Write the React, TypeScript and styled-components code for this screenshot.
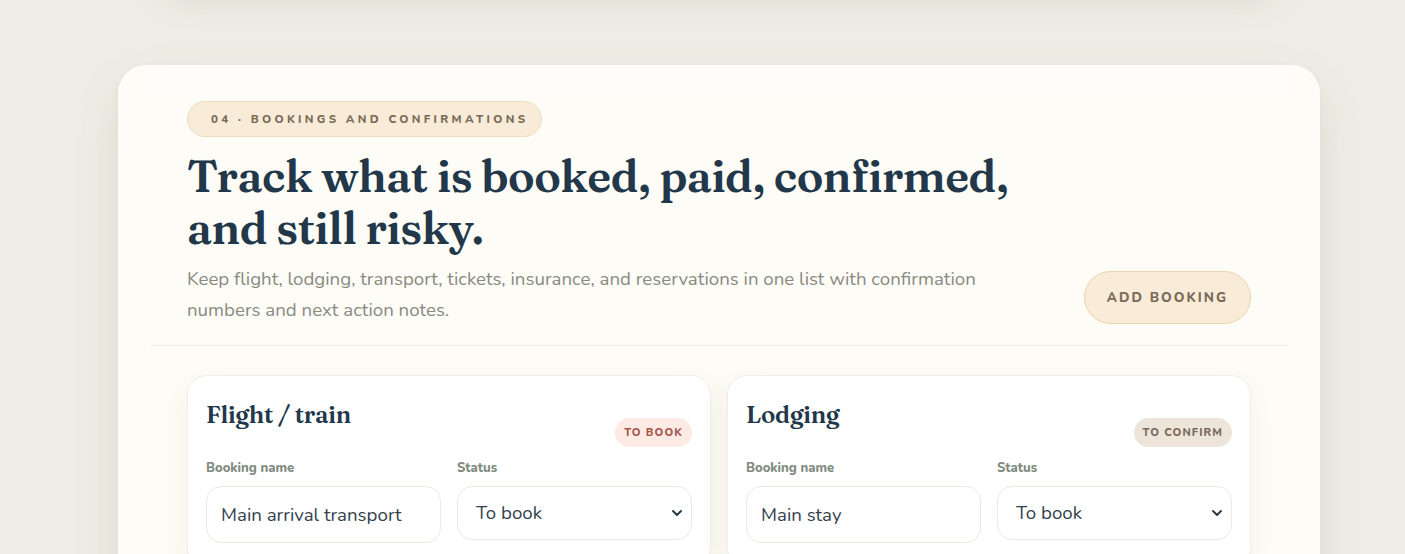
import React from "react";
import styled, { createGlobalStyle } from "styled-components";
import { ChevronDown } from "lucide-react";

const GlobalStyle = createGlobalStyle`
  * { box-sizing: border-box; }
  html, body { margin: 0; padding: 0; }
  body {
    background: #efeee6;
    font-family: "Nunito", "Lato", "Noto Sans", sans-serif;
    overflow: hidden;
  }
`;

const serif = `"Fraunces", "Liberation Serif", "DejaVu Serif", serif`;

const Page = styled.div`
  display: flex;
  flex-direction: column;
  gap: 85px;
  height: 554px;
  overflow: hidden;
  padding: 0 85px 0 118px;
`;

const PrevSection = styled.section`
  flex-shrink: 0;
  height: 200px;
  margin-top: -220px;
  margin-left: 40px;
  margin-right: 40px;
  border-radius: 28px;
  background: #f7f6ef;
  box-shadow: 0 18px 40px rgba(90, 90, 60, 0.14);
`;

const Panel = styled.section`
  width: 1202px;
  flex-shrink: 0;
  border-radius: 28px;
  background: #fdfcf6;
  box-shadow: 0 20px 50px rgba(90, 90, 60, 0.12), 0 2px 6px rgba(90, 90, 60, 0.05);
  padding: 0 33px 40px;
`;

const Header = styled.header`
  display: flex;
  align-items: flex-end;
  justify-content: space-between;
  padding: 36px 36px 19px;
  border-bottom: 1px solid #ece8de;
  background: linear-gradient(180deg, rgba(255, 255, 255, 0.5), rgba(255, 255, 255, 0) 60px);
`;

const Intro = styled.div`
  display: flex;
  flex-direction: column;
  align-items: flex-start;
`;

const Eyebrow = styled.span`
  display: inline-flex;
  align-items: center;
  height: 36px;
  padding: 0 13px 0 23px;
  border-radius: 999px;
  background: #f8ebd8;
  border: 1px solid #f0dcbd;
  color: #7a6a57;
  font-size: 11.5px;
  font-weight: 800;
  letter-spacing: 3.3px;
`;

const Title = styled.h1`
  margin: 13px 0 0;
  max-width: 860px;
  font-family: ${serif};
  font-weight: 600;
  font-size: 44.5px;
  line-height: 52px;
  letter-spacing: -0.5px;
  color: #22384a;
`;

const Lede = styled.p`
  margin: 10px 0 0;
  max-width: 810px;
  font-size: 18.7px;
  line-height: 31px;
  color: #8b8a80;
`;

const AddButton = styled.button`
  height: 53px;
  margin-bottom: 2px;
  padding: 0 22px;
  border-radius: 999px;
  border: 1px solid #ecd4ae;
  background: #f8ebd8;
  color: #7a6a57;
  font-family: inherit;
  font-size: 13.5px;
  font-weight: 800;
  letter-spacing: 2px;
  cursor: pointer;
`;

const Grid = styled.div`
  display: grid;
  grid-template-columns: minmax(0, 1fr) minmax(0, 1fr);
  gap: 16px;
  padding: 29px 36px 0;
`;

const Card = styled.article`
  background: #ffffff;
  border: 1px solid #f0ede4;
  border-radius: 20px;
  box-shadow: 0 10px 28px rgba(90, 90, 60, 0.07);
  padding: 22px 18px 24px;
`;

const CardTop = styled.div`
  display: flex;
  justify-content: space-between;
  align-items: flex-start;
`;

const CardTitle = styled.h2`
  margin: 0;
  font-family: ${serif};
  font-weight: 600;
  font-size: 24px;
  line-height: 34px;
  letter-spacing: -0.3px;
  color: #22384a;
`;

const Badge = styled.span<{ $tone: "danger" | "neutral" }>`
  margin-top: 20px;
  height: 29px;
  display: inline-flex;
  align-items: center;
  padding: 0 9px;
  border-radius: 999px;
  font-size: 11px;
  font-weight: 800;
  letter-spacing: 1.1px;
  background: ${(p) => (p.$tone === "danger" ? "#fdeae5" : "#ede5da")};
  color: ${(p) => (p.$tone === "danger" ? "#a5574b" : "#786a5b")};
`;

const Fields = styled.div`
  display: grid;
  grid-template-columns: minmax(0, 1fr) minmax(0, 1fr);
  gap: 16px;
  margin-top: 12px;
`;

const Field = styled.label`
  display: flex;
  flex-direction: column;
  gap: 9px;
  min-width: 0;
`;

const Label = styled.span`
  font-size: 13px;
  font-weight: 800;
  color: #7f8b80;
`;

const TextInput = styled.input`
  width: 100%;
  height: 57px;
  padding: 0 14px;
  border: 1px solid #ece9e1;
  border-radius: 15px;
  background: #fff;
  font-family: inherit;
  font-size: 18.7px;
  color: #33414c;
  outline: none;
`;

const SelectWrap = styled.div`
  position: relative;
`;

const Select = styled.select`
  width: 100%;
  height: 54px;
  padding: 0 36px 0 18px;
  appearance: none;
  border: 1px solid #ece9e1;
  border-radius: 15px;
  background: #fff;
  font-family: inherit;
  font-size: 18.7px;
  color: #33414c;
  outline: none;
`;

const Chevron = styled(ChevronDown)`
  position: absolute;
  right: 7px;
  top: 50%;
  transform: translateY(-50%);
  pointer-events: none;
  color: #2a3a47;
`;

type Booking = {
  title: string;
  badge: string;
  tone: "danger" | "neutral";
  name: string;
  status: string;
};

const bookings: Booking[] = [
  { title: "Flight / train", badge: "TO BOOK", tone: "danger", name: "Main arrival transport", status: "To book" },
  { title: "Lodging", badge: "TO CONFIRM", tone: "neutral", name: "Main stay", status: "To book" },
];

const statuses = ["To book", "Booked", "Paid", "Confirmed"];

const BookingCard = ({ booking }: { booking: Booking }) => (
  <Card>
    <CardTop>
      <CardTitle>{booking.title}</CardTitle>
      <Badge $tone={booking.tone}>{booking.badge}</Badge>
    </CardTop>
    <Fields>
      <Field>
        <Label>Booking name</Label>
        <TextInput defaultValue={booking.name} />
      </Field>
      <Field>
        <Label>Status</Label>
        <SelectWrap>
          <Select defaultValue={booking.status}>
            {statuses.map((s) => (
              <option key={s}>{s}</option>
            ))}
          </Select>
          <Chevron size={16} strokeWidth={3} />
        </SelectWrap>
      </Field>
    </Fields>
  </Card>
);

export default function App() {
  return (
    <>
      <GlobalStyle />
      <Page>
        <PrevSection />
        <Panel>
          <Header>
            <Intro>
              <Eyebrow>04 · BOOKINGS AND CONFIRMATIONS</Eyebrow>
              <Title>Track what is booked, paid, confirmed, and still risky.</Title>
              <Lede>
                Keep flight, lodging, transport, tickets, insurance, and reservations in one list with
                confirmation numbers and next action notes.
              </Lede>
            </Intro>
            <AddButton>ADD BOOKING</AddButton>
          </Header>
          <Grid>
            {bookings.map((b) => (
              <BookingCard key={b.title} booking={b} />
            ))}
          </Grid>
        </Panel>
      </Page>
    </>
  );
}
